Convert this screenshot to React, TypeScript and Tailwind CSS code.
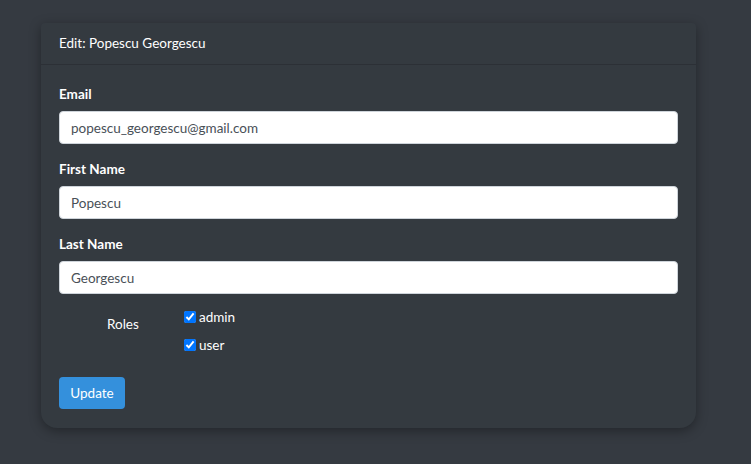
import React from 'react';

const fields = [
  { label: 'Email', value: 'popescu_georgescu@gmail.com' },
  { label: 'First Name', value: 'Popescu' },
  { label: 'Last Name', value: 'Georgescu' },
];

const roles = ['admin', 'user'];

export default function App() {
  return (
    <div className="min-h-[464px] w-full bg-[#353a41] pt-[23px] pl-[41px] font-['Lato','Noto_Sans',sans-serif] text-[13.5px] text-white">
      <div className="w-[655px] rounded-t-[4px] rounded-b-[16px] bg-[#343a40] shadow-[0_3px_12px_rgba(0,0,0,0.35)]">
        <div className="h-[42px] flex items-center px-[18px] border-b border-[#2c3036]">
          Edit: Popescu Georgescu
        </div>
        <div className="px-[18px] pt-[18px] pb-[19px]">
          {fields.map((f) => (
            <div key={f.label} className="mb-[14px]">
              <label className="block h-[22px] leading-[22px] font-bold mb-[6px]">{f.label}</label>
              <input
                readOnly
                value={f.value}
                className="block w-full h-[33px] rounded-[4px] border border-[#ced4da] bg-white px-[11px] text-[13.5px] text-[#495057] outline-none"
              />
            </div>
          ))}

          <div className="flex mt-[-2px]">
            <div className="w-[125px] pt-[7px] pl-[48px] leading-[22px]">Roles</div>
            <div className="flex flex-col gap-[6px]">
              {roles.map((r) => (
                <label key={r} className="flex items-center h-[22px] gap-[3px]">
                  <input type="checkbox" defaultChecked className="w-[12px] h-[12px] m-0 accent-[#0075ff]" />
                  <span>{r}</span>
                </label>
              ))}
            </div>
          </div>

          <button className="mt-[21px] h-[32px] w-[66px] rounded-[4px] bg-[#3490dc] text-white text-[13.5px]">
            Update
          </button>
        </div>
      </div>
    </div>
  );
}
